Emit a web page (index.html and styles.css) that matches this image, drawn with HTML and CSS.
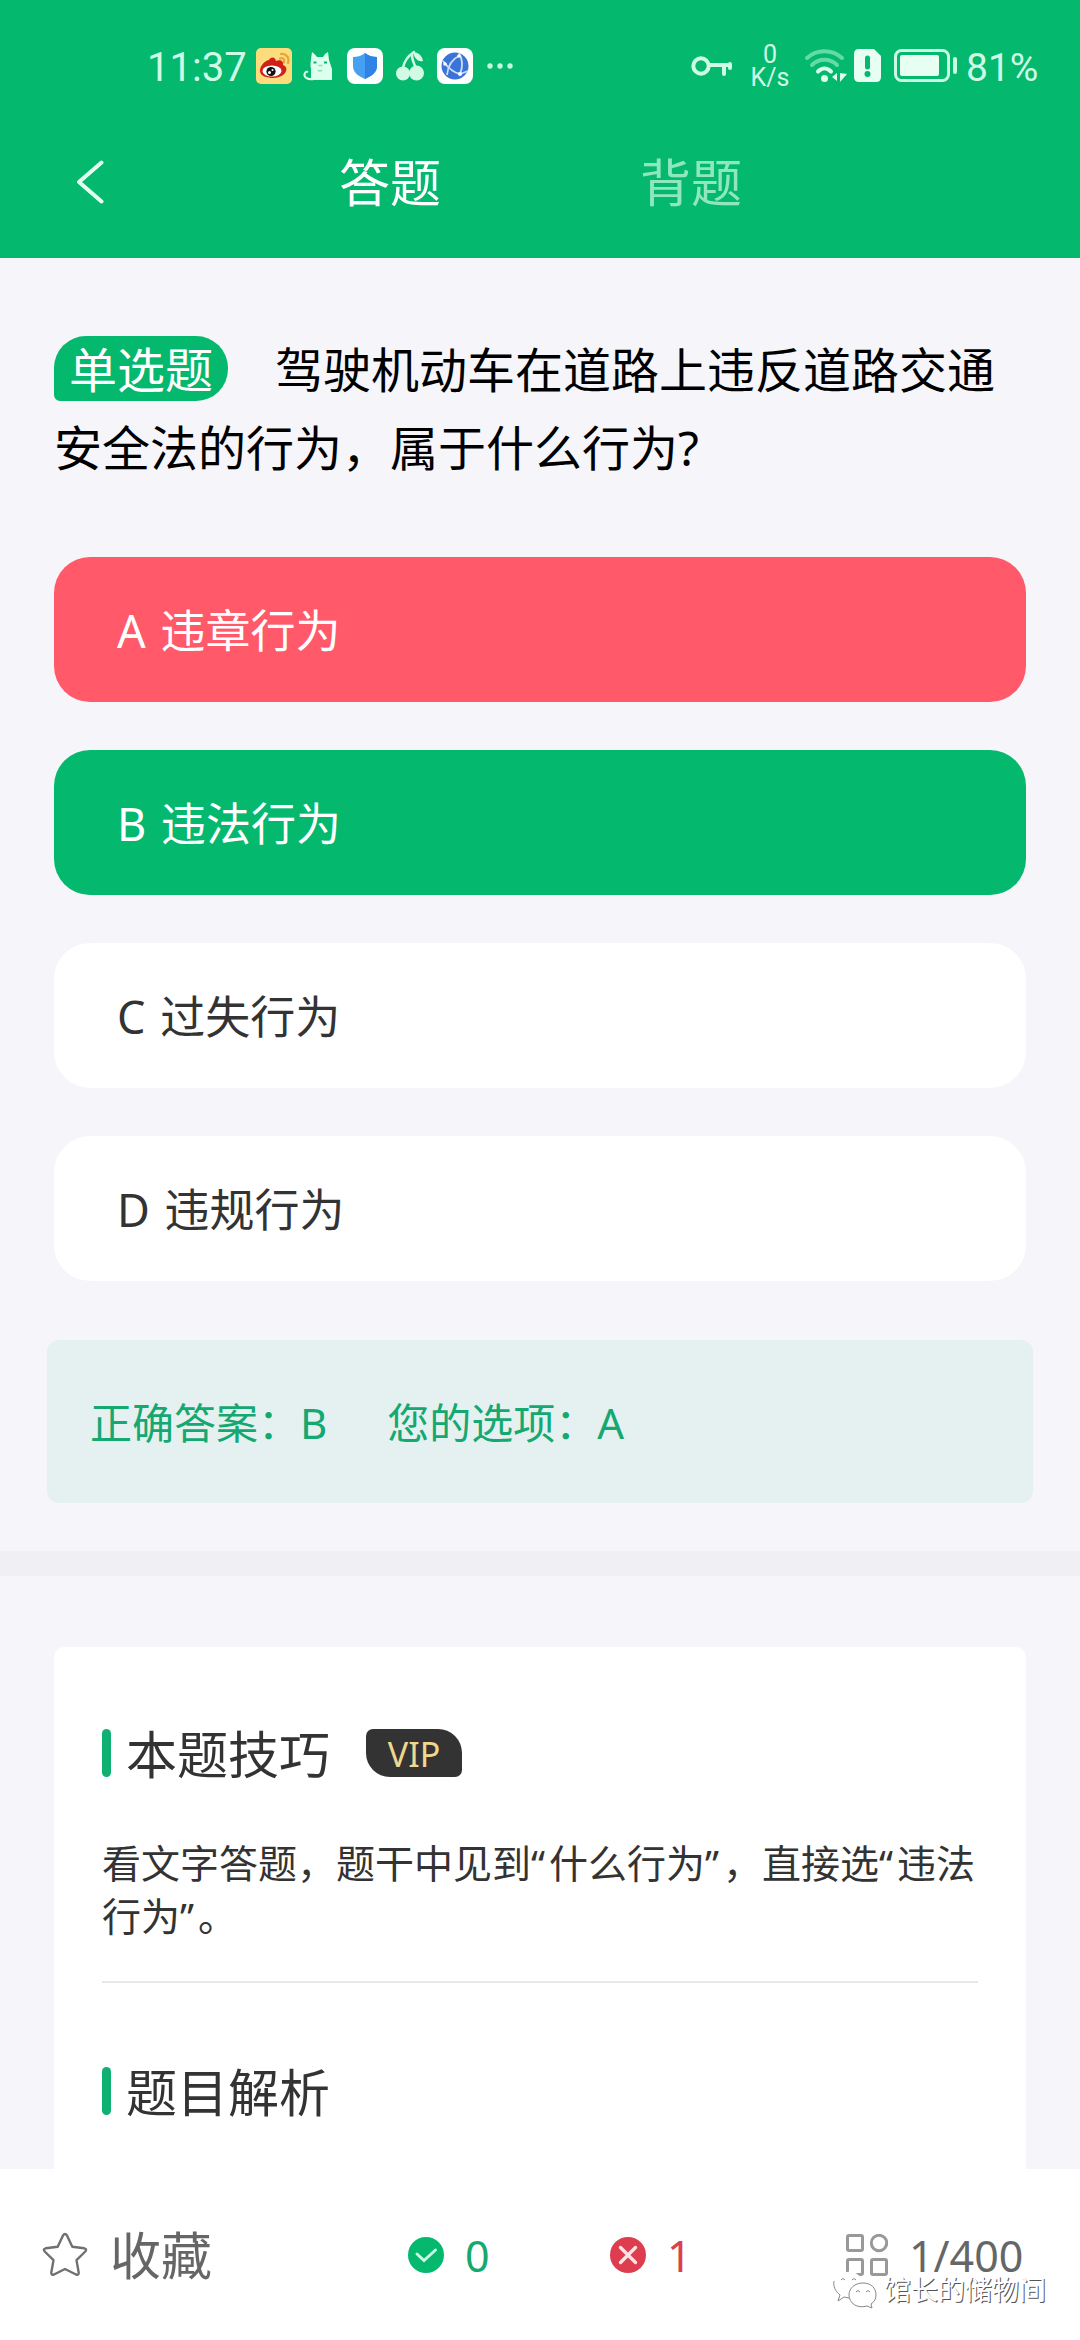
FILE: index.html
```
<!DOCTYPE html>
<html lang="zh-CN">
  <head>
    <meta charset="UTF-8" />
    <meta name="viewport" content="width=device-width, initial-scale=1.0" />
    <title>答题</title>
    <link rel="stylesheet" href="styles.css" />
  </head>
  <body>
    <header class="header">
      <div class="status">
        <span class="time">11:37</span>
        <!-- weibo -->
        <svg class="app" width="36" height="36" viewBox="0 0 36 36">
          <rect width="36" height="36" rx="5" fill="#fddc7b" />
          <path d="M4 23C4 17 10 12 13 12c1-3 6-4 7 1 4-2 8 0 7 4 3 1 4 4 3 6-1 4-7 7-13 7S4 28 4 23z" fill="#d0201a" />
          <ellipse cx="16" cy="23" rx="9.500" ry="5.500" fill="#fff" />
          <circle cx="15" cy="23.500" r="4.600" fill="#111" />
          <circle cx="13.500" cy="24.500" r="1.500" fill="#fff" />
          <circle cx="16.500" cy="22" r="1" fill="#fff" />
          <path d="M25 6c5-1 9 4 7 9M24 10.500c3-1 5 1 4 4" fill="none" stroke="#e5a53c" stroke-width="2.200" stroke-linecap="round" />
        </svg>
        <!-- cat -->
        <svg class="cat" width="30" height="30" viewBox="0 0 30 30">
          <path d="M8 8L9 1q3 2 5 5h6q2-4 5-5l1 8 3 9v11H8V18q-1-3 0-10z" fill="#dcffee" />
          <path d="M11 28c-7 1-11-2-9-6q1-2 3-1" fill="none" stroke="#dcffee" stroke-width="2" />
          <path d="M10.500 11.500h3M21 11.500h3" stroke="#04b86e" stroke-width="2.200" />
          <path d="M15.500 14.500h4M15 19q2 2 4 0" fill="none" stroke="#8fdcb7" stroke-width="1.500" />
        </svg>
        <!-- shield -->
        <svg class="shield" width="36" height="36" viewBox="0 0 36 36">
          <rect width="36" height="36" rx="8" fill="#fff" />
          <path d="M18 5c4 3 8 4 12 4v9c0 6-5 10-12 13C11 28 6 24 6 18V9c4 0 8-1 12-4z" fill="#459ff3" />
          <path d="M18 5c4 3 8 4 12 4v9c0 6-5 10-12 13z" fill="#2f83e2" />
        </svg>
        <!-- cherry -->
        <svg class="cherry" width="28" height="32" viewBox="0 0 28 32">
          <g fill="#d2fbe6">
            <circle cx="7" cy="23.500" r="7" />
            <circle cx="20.500" cy="23" r="7.500" />
            <path d="M17 3c4-2 9 2 10 8-5 1-8-2-10-8z" />
          </g>
          <path d="M7 18c1-6 5-12 11-16M16 5c0 5 2 9 4 13" fill="none" stroke="#d2fbe6" stroke-width="2.500" stroke-linecap="round" />
        </svg>
        <!-- browser -->
        <svg class="globe" width="36" height="36" viewBox="0 0 36 36">
          <rect width="36" height="36" rx="8" fill="#fff" />
          <circle cx="18" cy="18" r="13.500" fill="#3b73d8" />
          <path d="M6 13c6 8 11 12 17 13M22 5c4 7 4 14 1 21M22 8c-7 3-11 10-12 19M23 26l8-3" fill="none" stroke="#c9defc" stroke-width="1.800" />
          <circle cx="8" cy="16" r="1.800" fill="#fff" />
          <circle cx="22" cy="8" r="1.800" fill="#fff" />
          <circle cx="23" cy="26" r="2" fill="#fff" />
        </svg>
        <svg class="dots" width="26" height="6" viewBox="0 0 26 6" fill="#c6f7e0">
          <circle cx="3" cy="3" r="2.700" />
          <circle cx="13" cy="3" r="2.700" />
          <circle cx="23" cy="3" r="2.700" />
        </svg>

        <svg class="key" width="42" height="22" viewBox="0 0 42 22" fill="none" stroke="#cffbe6" stroke-width="4">
          <circle cx="10" cy="11" r="7.700" />
          <path d="M18 10h21M33 10v9M39 9v4" stroke-linecap="round" />
        </svg>
        <div class="speed"><span>0</span><span>K/s</span></div>
        <svg class="wifi" width="42" height="34" viewBox="0 0 42 34" fill="none">
          <path d="M2 9c10-9 25-9 35 0" stroke="#62dba7" stroke-width="4" stroke-linecap="round" />
          <path d="M7 16c7-7 18-7 25 0" stroke="#62dba7" stroke-width="4" stroke-linecap="round" />
          <path d="M13 22.500c4-4 9-4 13 0" stroke="#dcffee" stroke-width="4" stroke-linecap="round" />
          <circle cx="19.500" cy="29.500" r="3.500" fill="#dcffee" />
          <path d="M32 24v8l-5-4zM35 24v9l7-8z" fill="#dcffee" />
        </svg>
        <svg class="sim" width="27" height="34" viewBox="0 0 27 34">
          <path d="M5 0h15l7 7v21q0 5-5 5H5q-5 0-5-5V5q0-5 5-5z" fill="#e6fff2" />
          <path d="M13.500 9v9" stroke="#04b86e" stroke-width="5" stroke-linecap="round" />
          <circle cx="13.500" cy="25" r="3" fill="#04b86e" />
        </svg>
        <svg class="battery" width="64" height="34" viewBox="0 0 64 34">
          <rect x="1.500" y="1.500" width="53" height="30" rx="6" fill="none" stroke="#c9fae3" stroke-width="3" />
          <rect x="6" y="6" width="39" height="21" rx="2" fill="#e6fff2" />
          <path d="M61 10v13" stroke="#c9fae3" stroke-width="4" stroke-linecap="round" />
        </svg>
        <span class="percent">81%</span>
      </div>
      <nav class="nav">
        <svg class="back" width="28" height="44" viewBox="0 0 28 44">
          <path d="M25.500 2.500L3 22l22.500 19.500" fill="none" stroke="#e2fff0" stroke-width="4" stroke-linecap="round" stroke-linejoin="round" />
        </svg>
        <span class="tab active">答题</span>
        <span class="tab">背题</span>
      </nav>
    </header>

    <main class="content">
      <p class="question"><span class="tag">单选题</span>驾驶机动车在道路上违反道路交通安全法的行为，属于什么行为?</p>
      <div class="options">
        <div class="option wrong">A 违章行为</div>
        <div class="option right">B 违法行为</div>
        <div class="option">C 过失行为</div>
        <div class="option">D 违规行为</div>
      </div>
      <div class="answer"><span>正确答案：B</span><span>您的选项：A</span></div>
      <div class="band"></div>
      <section class="card">
        <h3 class="title">本题技巧<span class="vip">VIP</span></h3>
        <p class="tip">看文字答题，题干中见到<span class="quote">“</span>什么行为<span class="quote">”</span>，直接选<span class="quote">“</span>违法行为<span class="quote">”</span>。</p>
        <h3 class="title">题目解析</h3>
      </section>
    </main>

    <footer class="footer">
      <svg class="star" width="46" height="46" viewBox="0 0 46 46">
        <path d="M21 3.500q2-3 4 0l5.300 11.300 12 1.500q3 .7 1 3.200l-8.800 8.600 2.200 12.400q.2 3-2.700 2L23 37l-11 5.500q-2.900 1-2.700-2l2.200-12.400-8.800-8.600q-2-2.500 1-3.200l12-1.500z" fill="none" stroke="#707070" stroke-width="2.400" stroke-linejoin="round" />
      </svg>
      <span class="fav">收藏</span>
      <svg class="ok" width="36" height="36" viewBox="0 0 36 36">
        <circle cx="18" cy="18" r="18" fill="#04b86e" />
        <path d="M9 17l7 6.500L27.500 13" fill="none" stroke="#c9fae3" stroke-width="3" stroke-linecap="round" />
      </svg>
      <span class="num green">0</span>
      <svg class="no" width="36" height="36" viewBox="0 0 36 36">
        <circle cx="18" cy="18" r="18" fill="#dd3d4e" />
        <path d="M10.500 10.500l15 15M25.500 10.500l-15 15" stroke="#ffe3e4" stroke-width="3.400" stroke-linecap="round" />
      </svg>
      <span class="num red">1</span>
      <svg class="grid" width="42" height="42" viewBox="0 0 42 42" fill="none" stroke="#999" stroke-width="3">
        <rect x="1.500" y="1.500" width="15" height="15" rx="1.500" />
        <circle cx="33" cy="9" r="7.700" />
        <rect x="1.500" y="25.500" width="15" height="15" rx="1.500" />
        <rect x="25.500" y="25.500" width="15" height="15" rx="1.500" />
      </svg>
      <span class="num">1/400</span>
      <div class="watermark">
        <svg width="44" height="38" viewBox="0 0 44 38" fill="#fff" stroke="#888" stroke-width="1">
          <path d="M7 24C-3 16 1 2 14 1c8-1 15 4 16 11-10 0-17 7-14 15l-5-1-6 4z" stroke="none" />
          <path d="M1 10c-1 5 1 10 6 14l-2 6 6-4 5 1" fill="none" />
          <path d="M30 12c8 0 13 5 13 12 0 4-2 7-5 9l1 4-5-2c-10 3-18-3-18-11 0-7 6-12 14-12z" />
          <path d="M8 9q2-3 4 0M19 9q2-3 4 0M23 21q2-3 4 0M33 21q2-3 4 0" fill="none" />
        </svg>
        <span>馆长的储物间</span>
      </div>
    </footer>
  </body>
</html>
```

FILE: styles.css
```
* {
  box-sizing: border-box;
}
body {
  display: flex;
  flex-direction: column;
  width: 1080px;
  height: 2340px;
  margin: 0;
  overflow: hidden;
  background-color: #f5f5fa;
  color: #333;
  font-family: "Noto Sans", "Noto Sans CJK SC", sans-serif;
}
svg {
  display: block;
  flex-shrink: 0;
}
h3,
p {
  margin: 0;
  font-weight: normal;
}
.header {
  height: 258px;
  flex-shrink: 0;
  background-color: #04b86e;
}
.status {
  display: flex;
  align-items: center;
  height: 132px;
  padding-left: 147px;
  color: #cffbe6;
  font-family: Roboto, sans-serif;
  font-weight: 500;
  white-space: nowrap;
}
.time {
  width: 109px;
  padding-top: 3px;
  font-size: 40px;
  font-weight: 400;
  line-height: 40px;
}
.cat {
  margin-left: 11px;
}
.shield {
  margin-left: 14px;
}
.cherry,
.globe {
  margin-left: 13px;
}
.dots {
  margin-left: 14px;
}
.key {
  margin-left: 178px;
}
.speed {
  display: flex;
  flex-direction: column;
  align-items: center;
  width: 38px;
  margin-left: 18px;
  font-size: 25px;
  font-weight: 400;
  line-height: 23px;
}
.wifi {
  margin-left: 16px;
}
.sim {
  margin-left: 7px;
}
.battery {
  margin-left: 13px;
}
.percent {
  margin-left: 8px;
  padding-top: 4px;
  font-size: 39px;
  font-weight: 400;
  line-height: 40px;
}
.nav {
  display: flex;
  align-items: center;
  height: 100px;
  padding-left: 76px;
}
.tab {
  margin-left: 199px;
  font-size: 51px;
  line-height: 60px;
  color: #8fe6bf;
}
.active {
  margin-left: 235px;
  color: #fff;
}
.content {
  flex: 1;
  min-height: 0;
  overflow: hidden;
}
.question {
  padding: 73px 54px 0;
  font-size: 48px;
  line-height: 78px;
  color: #000;
}
.tag {
  display: inline-block;
  height: 65px;
  margin-right: 47px;
  padding: 0 15px;
  border-radius: 32px 32px 32px 6px;
  background-color: #04b86e;
  color: #fff;
  line-height: 67px;
}
.options {
  display: grid;
  gap: 48px;
  padding: 70px 54px 0;
}
.option {
  height: 145px;
  padding-left: 63px;
  border-radius: 36px;
  background-color: #fff;
  font-size: 45px;
  line-height: 148px;
  word-spacing: 3px;
}
.wrong {
  background-color: #ff596a;
  color: #fff;
}
.right {
  background-color: #04b86e;
  color: #fff;
}
.answer {
  display: flex;
  gap: 60px;
  height: 163px;
  margin: 59px 47px 0;
  padding-left: 43px;
  border-radius: 12px;
  background-color: #e5f1f1;
  color: #15a870;
  font-size: 42px;
  line-height: 166px;
}
.band {
  height: 25px;
  margin-top: 48px;
  background-color: #efeff4;
}
.card {
  height: 540px;
  margin: 71px 54px 0;
  padding: 82px 48px 0;
  border-radius: 10px;
  background-color: #fff;
}
.title {
  display: flex;
  height: 48px;
  font-size: 51px;
  line-height: 51px;
}
.title::before {
  content: "";
  width: 9px;
  height: 48px;
  margin-right: 15px;
  border-radius: 5px;
  background-color: #0fb072;
}
.vip {
  width: 96px;
  height: 48px;
  margin-left: 36px;
  border-radius: 7px 24px 7px 24px;
  background-color: #333;
  color: #efd78f;
  font-size: 34px;
  text-align: center;
}
.tip {
  margin-bottom: 84px;
  padding: 59px 0 39px;
  border-bottom: 2px solid #e8e8e8;
  font-size: 39px;
  line-height: 53px;
}
.quote {
  letter-spacing: 4px;
}
.footer {
  position: relative;
  display: flex;
  align-items: center;
  height: 171px;
  flex-shrink: 0;
  padding-left: 42px;
  background-color: #fff;
  color: #666;
}
.fav {
  width: 102px;
  margin-left: 22px;
  font-size: 51px;
  line-height: 60px;
}
.ok {
  margin-left: 196px;
}
.num {
  width: 28px;
  margin-left: 21px;
  padding-top: 2px;
  font-size: 43px;
  line-height: 50px;
}
.no {
  margin-left: 117px;
}
.grid {
  margin-left: 151px;
}
.green {
  color: #15a870;
}
.red {
  color: #d94050;
}
/* account mark over the toolbar */
.watermark {
  position: absolute;
  left: 833px;
  top: 102px;
  display: flex;
  align-items: center;
  gap: 7px;
  color: #fff;
  font-size: 27px;
  line-height: 36px;
  text-shadow: 1px 1px 0 #555;
  white-space: nowrap;
}
```
